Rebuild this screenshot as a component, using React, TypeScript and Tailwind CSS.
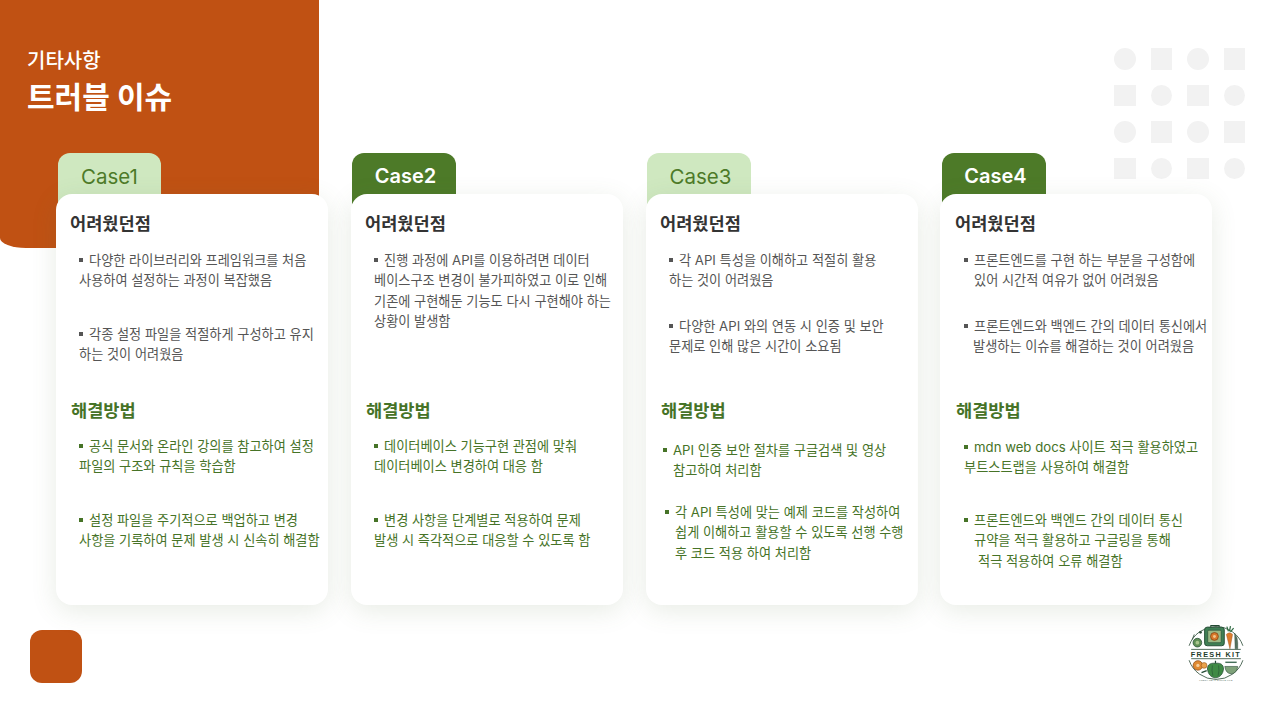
const DARK = "bg-[#4d7a28] text-white font-semibold text-[20px] pl-[3px]";
const LIGHT = "bg-[#cfe8c0] text-[#4d7a28] font-normal text-[20.5px]";

type Item = { top: string; left: string; gap: string; lines: { text: string; cls: string }[] };

function it(top: string, left: string, gap: string, lines: [string, string][]): Item {
  return { top, left, gap, lines: lines.map(([text, cls]) => ({ text, cls })) };
}

const cases = [
  {
    name: "Case1",
    tab: LIGHT,
    tabBox: "ml-[2px] w-[103px]",
    col: "",
    pad: "px-[14px]",
    problems: [
      it("mt-0", "ml-[23px]", "mr-[6px]", [["다양한 라이브러리와 프레임워크를 처음", "ml-0"], ["사용하여 설정하는 과정이 복잡했음", "ml-0"]]),
      it("mt-[33px]", "ml-[23px]", "mr-[6px]", [["각종 설정 파일을 적절하게 구성하고 유지", "ml-0"], ["하는 것이 어려웠음", "ml-0"]]),
    ],
    solutions: [
      it("mt-[1px]", "ml-[23px]", "mr-[6px]", [["공식 문서와 온라인 강의를 참고하여 설정", "ml-0"], ["파일의 구조와 규칙을 학습함", "ml-0"]]),
      it("mt-[33px]", "ml-[23px]", "mr-[6px]", [["설정 파일을 주기적으로 백업하고 변경", "ml-0"], ["사항을 기록하여 문제 발생 시 신속히 해결함", "ml-0"]]),
    ],
  },
  {
    name: "Case2",
    tab: DARK,
    tabBox: "ml-[1px] w-[104px]",
    col: "",
    pad: "px-[14px]",
    problems: [
      it("mt-0", "ml-[23px]", "mr-[6px]", [
        ["진행 과정에 API를 이용하려면 데이터", "ml-0"],
        ["베이스구조 변경이 불가피하였고 이로 인해", "ml-0"],
        ["기존에 구현해둔 기능도 다시 구현해야 하는", "ml-0"],
        ["상황이 발생함", "ml-0"],
      ]),
    ],
    solutions: [
      it("mt-[1px]", "ml-[23px]", "mr-[6px]", [["데이터베이스 기능구현 관점에 맞춰", "ml-0"], ["데이터베이스 변경하여 대응 함", "ml-0"]]),
      it("mt-[33px]", "ml-[23px]", "mr-[6px]", [["변경 사항을 단계별로 적용하여 문제", "ml-0"], ["발생 시 즉각적으로 대응할 수 있도록 함", "ml-0"]]),
    ],
  },
  {
    name: "Case3",
    tab: `${LIGHT} pl-[3px]`,
    tabBox: "ml-[1px] w-[104px]",
    col: "",
    pad: "px-[14px]",
    problems: [
      it("mt-0", "ml-[23px]", "mr-[6px]", [["각 API 특성을 이해하고 적절히 활용", "ml-0"], ["하는 것이 어려웠음", "ml-0"]]),
      it("mt-[25px]", "ml-[23px]", "mr-[6px]", [["다양한 API 와의 연동 시 인증 및 보안", "ml-0"], ["문제로 인해 많은 시간이 소요됨", "ml-0"]]),
    ],
    solutions: [
      it("mt-[5px]", "ml-[17px]", "mr-[6px]", [["API 인증 보안 절차를 구글검색 및 영상", "ml-0"], ["참고하여 처리함", "ml-[10px]"]]),
      it("mt-[21px]", "ml-[19px]", "mr-[6px]", [["각 API 특성에 맞는 예제 코드를 작성하여", "ml-0"], ["쉽게 이해하고 활용할 수 있도록 선행 수행", "ml-[10px]"], ["후 코드 적용 하여 처리함", "ml-[10px]"]]),
    ],
  },
  {
    name: "Case4",
    tab: DARK,
    tabBox: "ml-[2px] w-[104px]",
    col: "-ml-[1px]",
    pad: "px-[15px]",
    problems: [
      it("mt-0", "ml-[23px]", "mr-[6px]", [["프론트엔드를 구현 하는 부분을 구성함에", "ml-0"], ["있어 시간적 여유가 없어 어려웠음", "ml-[10px]"]]),
      it("mt-[25px]", "ml-[23px]", "mr-[6px]", [["프론트엔드와 백엔드 간의 데이터 통신에서", "ml-0"], ["발생하는 이슈를 해결하는 것이 어려웠음", "ml-[9px]"]]),
    ],
    solutions: [
      it("mt-[2px]", "ml-[23px]", "mr-[6px]", [["mdn web docs 사이트 적극 활용하였고", "ml-0"], ["부트스트랩을 사용하여 해결함", "ml-0"]]),
      it("mt-[32px]", "ml-[23px]", "mr-[6px]", [["프론트엔드와 백엔드 간의 데이터 통신", "ml-0"], ["규약을 적극 활용하고 구글링을 통해", "ml-[10px]"], ["적극 적용하여 오류 해결함", "ml-[14px]"]]),
    ],
  },
];

function Bullets({ items, tone }: { items: Item[]; tone: string }) {
  return (
    <>
      {items.map((item, i) => (
        <div key={i} className={`${item.top} ${item.left} ${tone} text-[13.2px] leading-[20.4px]`}>
          {item.lines.map((line, j) => (
            <div key={j} className={`${line.cls} whitespace-nowrap`}>
              {j === 0 && <span className={`inline-block w-[4px] h-[4px] align-[3px] bg-current ${item.gap}`} />}
              {line.text}
            </div>
          ))}
        </div>
      ))}
    </>
  );
}

function Dots() {
  const cells = Array.from({ length: 16 }, (_, i) => (Math.floor(i / 4) + i) % 2 === 0);
  return (
    <div className="grid grid-cols-4 gap-[15px] w-[131px] h-[131px]">
      {cells.map((round, i) => (
        <div key={i} className={`w-[21.5px] h-[21.5px] bg-[#f2f2f2] ${round ? "rounded-full" : ""}`} />
      ))}
    </div>
  );
}

function Logo() {
  return (
    <svg width="60" height="60" viewBox="0 0 58 58" fill="none">
      {/* outer ring, broken by the wordmark */}
      <path d="M3 22 A27.5 27.5 0 0 1 55 22" stroke="#2f4f3a" strokeWidth="0.8" />
      <path d="M3 36 A27.5 27.5 0 0 0 55 36" stroke="#2f4f3a" strokeWidth="0.8" />
      {/* box with orange slice */}
      <path d="M24 4 V2.5 H32 V4" stroke="#234a33" strokeWidth="1" />
      <rect x="18" y="4" width="19" height="18" rx="2.5" fill="#3f8055" stroke="#234a33" strokeWidth="0.9" />
      <rect x="21" y="7" width="13" height="12" rx="1" fill="#9ab884" stroke="#234a33" strokeWidth="0.6" />
      <circle cx="27.5" cy="13" r="3.8" fill="#d9792a" stroke="#7a3d12" strokeWidth="0.7" />
      <circle cx="27.5" cy="13" r="1.4" fill="#f2c58c" />
      {/* carrot and knife */}
      <path d="M39 11 Q42 8 45 11 L42.5 25 Z" fill="#dd7b2c" stroke="#8b4a14" strokeWidth="0.4" />
      <path d="M41 8 L39.5 3.5 M42 8 L43 3 M43 8.5 L46 5" stroke="#2f6b42" strokeWidth="1.2" />
      <path d="M47 10 Q50 14 50 19 L50 25 L47.5 25 Z" fill="#55705f" stroke="#2f4f3a" strokeWidth="0.4" />
      {/* round vegetable on the left */}
      <circle cx="11" cy="19" r="4.2" fill="#5f8f55" stroke="#234a33" strokeWidth="0.7" />
      <circle cx="11" cy="19" r="1.8" fill="#a9c58e" />
      <circle cx="14" cy="9" r="1.3" fill="#2f4f3a" />
      <path d="M6 16 L8 11" stroke="#2f4f3a" strokeWidth="0.8" />
      {/* wordmark */}
      <path d="M5 25.5 H53" stroke="#2f4f3a" strokeWidth="0.8" />
      <text x="29" y="32.5" textAnchor="middle" fontFamily="'Liberation Sans', sans-serif" fontSize="7" fontWeight="700" letterSpacing="1.3" fill="#1f3d2c">FRESH KIT</text>
      <path d="M5 34.5 H53" stroke="#2f4f3a" strokeWidth="0.8" />
      {/* orange slices */}
      <circle cx="11.5" cy="41" r="4.6" fill="#e08a32" stroke="#8b4a14" strokeWidth="0.7" />
      <circle cx="11.5" cy="41" r="1.6" fill="#f5cf9c" />
      <circle cx="17.5" cy="41" r="2.8" fill="#eaa24d" stroke="#8b4a14" strokeWidth="0.5" />
      {/* green pepper */}
      <path d="M28.5 39 C35 38 37 42 36 46 C35 51 31 53 28.5 53 C26 53 22 51 21 46 C20 42 22 38 28.5 39 Z" fill="#3f8a45" stroke="#234a33" strokeWidth="0.7" />
      <path d="M25.5 41 Q24.5 46 26 51 M31.5 41 Q32.5 46 31 51" stroke="#234a33" strokeWidth="0.5" />
      <path d="M28.5 39 V36.5" stroke="#234a33" strokeWidth="1.2" />
      {/* bowl */}
      <path d="M38 38 H49" stroke="#46705a" strokeWidth="1.4" />
      <path d="M37.5 42 H50 Q49 49 43.7 49 Q38.5 49 37.5 42 Z" fill="#7fa27a" stroke="#2f4f3a" strokeWidth="0.6" />
      <path d="M15 48 L20 46" stroke="#234a33" strokeWidth="1.4" />
      <text x="29" y="56.5" textAnchor="middle" fontFamily="'Liberation Sans', sans-serif" fontSize="2.2" fill="#55705f" letterSpacing="0.2">FRESH MEAL SIMPLE LIFE</text>
    </svg>
  );
}

export default function App() {
  return (
    <div className="relative w-[1280px] h-[720px] overflow-hidden bg-white font-['Inter','Noto_Sans_CJK_KR',sans-serif]">
      {/* orange panel sits behind the header and first card */}
      <div className="absolute left-0 top-0 w-[319px] h-[248px] bg-[#c05113] rounded-bl-[26px_10px]" />

      <div className="relative flex flex-col h-full">
        <header className="flex justify-between h-[153px] pl-[27px] pr-[35px] pt-[48px]">
          <div className="text-white">
            <div className="text-[20px] leading-[24px] font-medium mt-[1px]">기타사항</div>
            <div className="text-[30px] leading-[44px] font-bold mt-[2px]">트러블 이슈</div>
          </div>
          <Dots />
        </header>

        <main className="flex pl-[56px] gap-x-[23px]">
          {cases.map((c) => (
            <section key={c.name} className={`w-[272px] ${c.col}`}>
              <div className={`${c.tabBox} ${c.tab} h-[52px] rounded-t-[12px] text-center leading-[47px]`}>{c.name}</div>
              <div className={`-mt-[11px] relative h-[411px] bg-white rounded-[16px] ${c.pad} pt-[18px] shadow-[0_6px_26px_rgba(90,120,70,0.14)]`}>
                <h3 className="text-[17.6px] leading-[24px] font-semibold text-[#333333]">어려웠던점</h3>
                <div className="h-[162px] pt-[14px] -ml-[14px]">
                  <Bullets items={c.problems} tone="text-[#555555]" />
                </div>
                <h3 className="text-[17.6px] leading-[24px] font-semibold text-[#467327] ml-[1px] mt-[1px]">해결방법</h3>
                <div className="pt-[12px] -ml-[14px]">
                  <Bullets items={c.solutions} tone="text-[#467327]" />
                </div>
              </div>
            </section>
          ))}
        </main>

        <footer className="flex justify-between items-start pl-[30px] pr-[34px] pt-[18px]">
          <div className="w-[52px] mt-[7px] h-[53px] rounded-[12px] bg-[#c05113]" />
          <Logo />
        </footer>
      </div>
    </div>
  );
}
